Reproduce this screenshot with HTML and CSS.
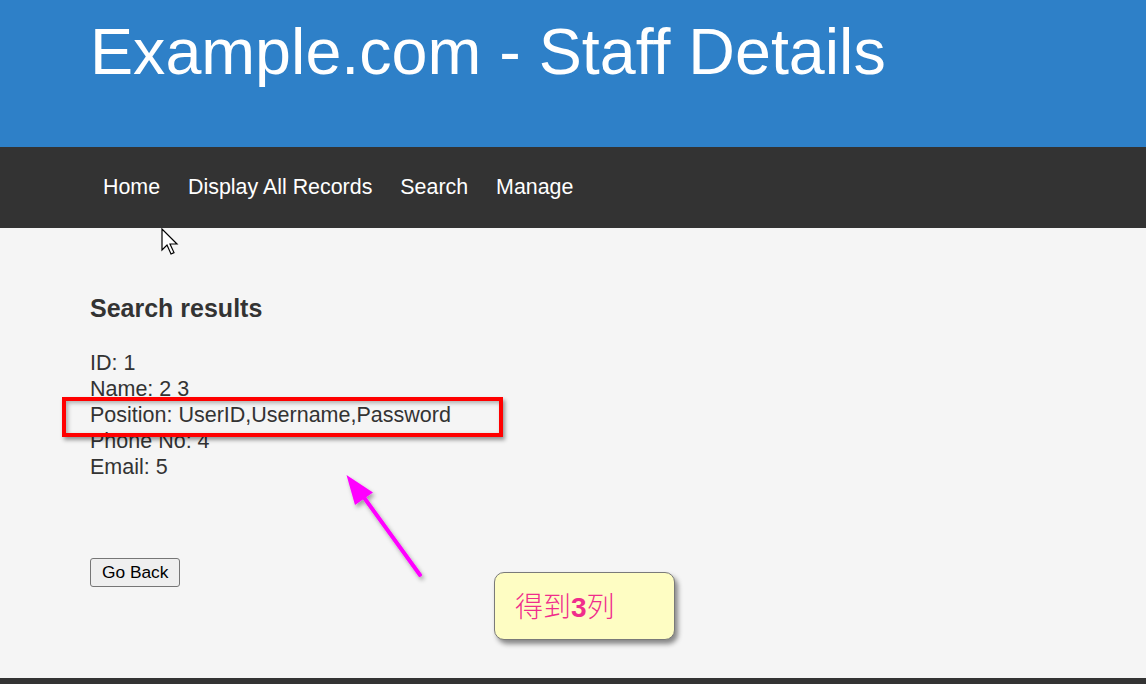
FILE: index.html
```html
<!DOCTYPE html>
<html lang="en">
<head>
<meta charset="utf-8">
<title>Example.com - Staff Details</title>
<link rel="stylesheet" href="styles.css">
</head>
<body>
<header class="site-header">
  <h1 class="site-title">Example.com - Staff Details</h1>
</header>
<nav class="topnav">
  <ul class="nav-list">
    <li><a href="#">Home</a></li>
    <li><a href="#">Display All Records</a></li>
    <li><a href="#">Search</a></li>
    <li><a href="#">Manage</a></li>
  </ul>
</nav>
<main class="content">
  <h3 class="results-title">Search results</h3>
  <p class="record">ID: 1<br>Name: 2 3<br>Position: UserID,Username,Password<br>Phone No: 4<br>Email: 5</p>
  <button class="back-btn" type="button">Go Back</button>
</main>
<footer class="site-footer"></footer>

<div class="highlight-box"></div>
<svg class="pointer-arrow" width="110" height="130" viewBox="330 460 110 130">
  <defs>
    <filter id="shadow" x="-30%" y="-30%" width="160%" height="160%">
      <feDropShadow dx="2" dy="3" stdDeviation="2" flood-color="#000" flood-opacity="0.35"/>
    </filter>
  </defs>
  <g filter="url(#shadow)">
    <line x1="420" y1="575" x2="360" y2="492" stroke="#ff00ff" stroke-width="4" stroke-linecap="round"/>
    <polygon points="346.5,475 373,492.5 355,505" fill="#ff00ff"/>
  </g>
</svg>
<div class="callout"><span class="callout-text">得到<b>3</b>列</span></div>
<svg class="cursor" width="18" height="28" viewBox="0 0 18 28">
  <path d="M1 1 L1 22 L6 17 L10 26 L13 24.6 L9 16 L16 16 Z" fill="#fff" stroke="#000" stroke-width="1.2" stroke-linejoin="miter"/>
</svg>
</body>
</html>
```
FILE: styles.css
```css
html, body {
  margin: 0;
  padding: 0;
}
body {
  background: #f5f5f5;
  font-family: "Liberation Sans", Arial, sans-serif;
  color: #333333;
  overflow: hidden;
}
.site-header {
  background: #2e80c8;
  height: 147px;
  box-sizing: border-box;
  padding: 15px 0 0 90px;
}
.site-title {
  margin: 0;
  font-size: 64.6px;
  font-weight: normal;
  line-height: 74px;
  color: #ffffff;
}
.topnav {
  background: #333333;
  height: 81px;
  display: flex;
  align-items: center;
  padding-left: 89px;
}
.nav-list {
  list-style: none;
  margin: 0;
  padding: 0;
  display: flex;
}
.nav-list a {
  display: block;
  padding: 0 14px;
  color: #ffffff;
  text-decoration: none;
  font-size: 21.4px;
}
.content {
  height: 450px;
  box-sizing: border-box;
  padding: 66px 90px 0;
}
.results-title {
  margin: 0 0 28px;
  font-size: 25px;
  font-weight: bold;
  line-height: 29px;
}
.record {
  margin: -1px 0 0;
  font-size: 21.5px;
  line-height: 26px;
}
.back-btn {
  margin-top: 78px;
  height: 29px;
  padding: 0 11px;
  font-family: "Liberation Sans", Arial, sans-serif;
  font-size: 17.33px;
  color: #000000;
  background: #efefef;
  border: 1px solid #767676;
  border-radius: 3px;
}
.site-footer {
  background: #333333;
  height: 6px;
}
.highlight-box {
  position: absolute;
  left: 62px;
  top: 397px;
  width: 441px;
  height: 40px;
  box-sizing: border-box;
  border: 4px solid #ff0000;
  box-shadow: 2px 3px 4px rgba(0, 0, 0, 0.4), inset 2px 2px 4px rgba(0, 0, 0, 0.3);
}
.pointer-arrow {
  position: absolute;
  left: 330px;
  top: 460px;
}
.callout {
  position: absolute;
  left: 494px;
  top: 572px;
  width: 181px;
  height: 68px;
  box-sizing: border-box;
  background: #fefdc3;
  border: 1px solid #7a7a7a;
  border-radius: 10px;
  box-shadow: 3px 4px 5px rgba(0, 0, 0, 0.45);
  display: flex;
  align-items: center;
  padding-left: 20px;
}
.callout-text {
  font-family: "Noto Sans CJK SC", "Liberation Sans", sans-serif;
  font-size: 28px;
  font-weight: 300;
  color: #f02d8c;
  line-height: 1;
}
.callout-text b {
  font-family: "Liberation Sans", Arial, sans-serif;
  font-weight: bold;
}
.cursor {
  position: absolute;
  left: 161px;
  top: 228px;
}
```
